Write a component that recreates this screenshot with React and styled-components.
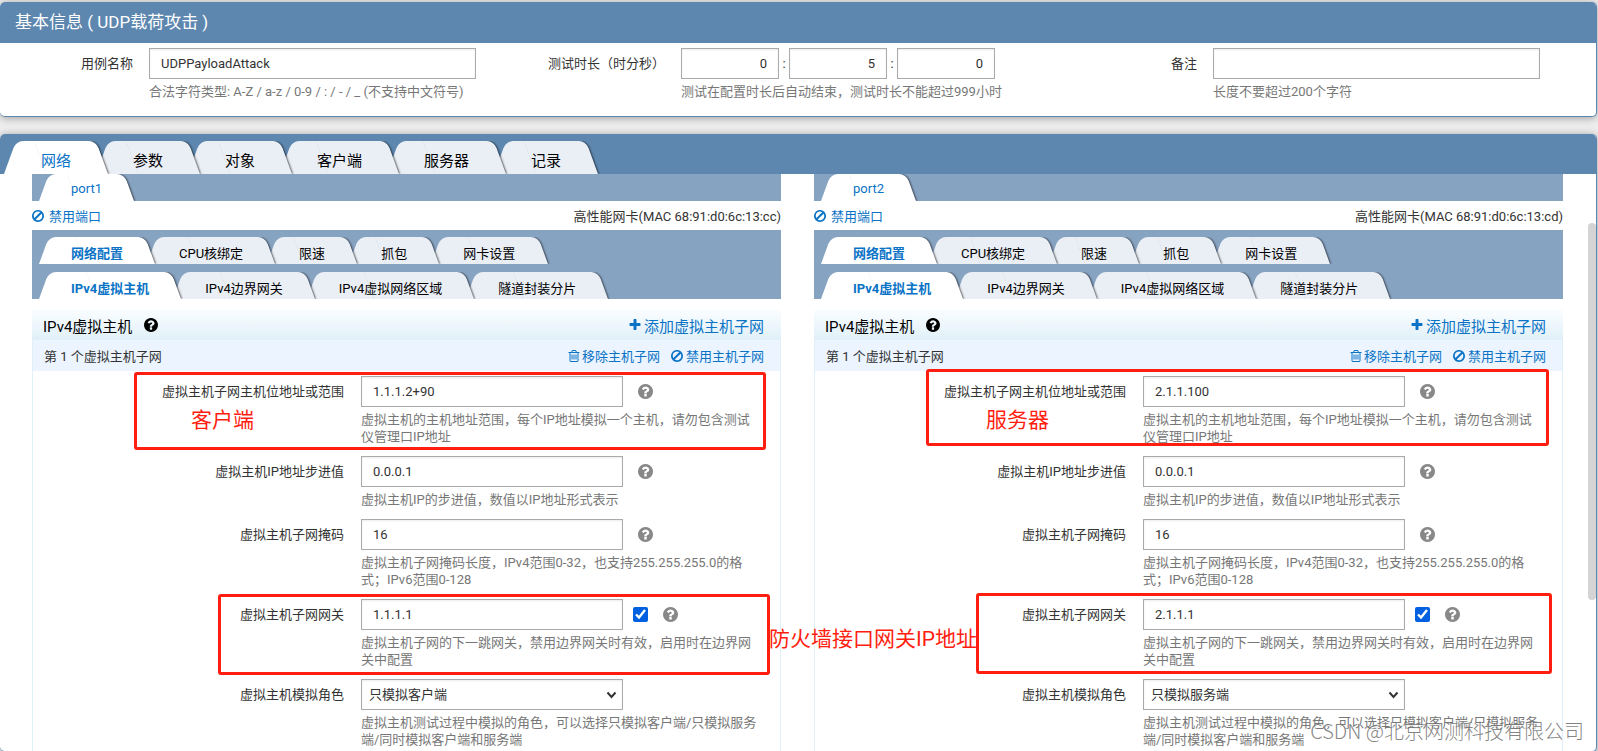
/**
 * Test Case Editor
 *
 * Basic info of a case and the network settings of its two ports,
 * with review notes drawn over the form
 */

import React, { useState } from 'react';
import styled, { createGlobalStyle, css } from 'styled-components';

const GlobalStyle = createGlobalStyle`
  * {
    box-sizing: border-box;
  }

  body {
    margin: 0;
    background: #eeeeee;
    overflow: hidden;
    font-family: Roboto, "Noto Sans CJK SC", sans-serif;
    font-size: 13px;
    color: #333;
  }

  button,
  input,
  select {
    font: inherit;
    color: inherit;
    margin: 0;
  }
`;

const Page = styled.div`
  position: relative;
  display: flex;
  flex-direction: column;
  gap: 17px;
  height: 100vh;
  padding: 2px 1px 0 0;
`;

const Panel = styled.section`
  position: relative;
  background: #fff;
  border: 1px solid #5d87af;
  border-left: none;
  border-top: none;
  border-radius: 5px;
  box-shadow: 0 1px 8px rgba(0, 0, 0, 0.35);
  overflow: hidden;
  flex: ${props => (props.$grow ? '1 1 0' : 'none')};
  margin-bottom: ${props => (props.$grow ? '-1px' : 0)};
  min-height: 0;
`;

const PanelTitle = styled.h1`
  margin: 0;
  padding: 0 15px;
  background: #5d87af;
  color: #fff;
  font-size: 17px;
  font-weight: 400;
  line-height: 41px;
`;

const InfoGrid = styled.div`
  display: grid;
  grid-template-columns: repeat(3, 1fr);
  padding: 5px 0 16px;
`;

const InfoField = styled.div`
  display: grid;
  grid-template-columns: 133px 1fr;
  column-gap: 16px;
  padding-right: 56px;
`;

const Label = styled.label`
  line-height: 31px;
  text-align: right;
`;

const Controls = styled.div`
  display: flex;
  align-items: center;
`;

const fieldBox = css`
  height: 31px;
  background: #fff;
  border: 1px solid #aaa;
  border-radius: 0;
  box-shadow: inset 0 1px 2px rgba(0, 0, 0, 0.08);
  outline: none;
`;

const TextInput = styled.input`
  ${fieldBox}
  width: ${props => props.$width || '100%'};
  padding: 0 11px;
  text-align: ${props => (props.$numeric ? 'right' : 'left')};
`;

const SelectWrap = styled.div`
  position: relative;
  width: 262px;
`;

const RoleSelect = styled.select`
  ${fieldBox}
  appearance: none;
  width: 100%;
  padding: 0 24px 0 7px;
`;

const Chevron = styled.svg`
  position: absolute;
  right: 6px;
  top: 12px;
  pointer-events: none;
`;

const Colon = styled.span`
  width: 10px;
  text-align: center;
`;

const Hint = styled.p`
  margin: 4px 0 0;
  color: #777;
  line-height: 17px;
`;

const TabBar = styled.div`
  display: flex;
  align-items: flex-end;
  height: ${props => props.$height}px;
  padding-left: ${props => (props.$main ? 4 : 7)}px;
  background: ${props => (props.$main ? '#5d87af' : '#87a3c2')};
`;

// Slanted tab: two skewed halves meet in the middle behind the text
const TabButton = styled.button`
  position: relative;
  z-index: ${props => props.$level};
  height: ${props => (props.$main ? 33 : 27)}px;
  padding: ${props => (props.$main ? '4px 37px 0' : props.$flat ? '2px 32px 0' : '3px 32px 0')};
  margin-right: ${props => (props.$main ? -12 : -8)}px;
  border: none;
  background: none;
  color: ${props => (props.$active ? '#0a73c6' : '#000')};
  font-size: ${props => (props.$main ? 15 : 13)}px;
  font-weight: ${props => (props.$active && props.$bold ? 700 : 400)};
  white-space: nowrap;
  cursor: pointer;

  &::before,
  &::after {
    content: '';
    position: absolute;
    z-index: -1;
    top: 0;
    bottom: 0;
    background: ${props => (props.$active ? '#fff' : '#eaeef5')};
  }

  &::before {
    left: 0;
    right: 40%;
    border-top-left-radius: 7px;
    transform: skewX(-20deg);
    transform-origin: bottom;
  }

  &::after {
    left: 40%;
    right: 0;
    border-top-right-radius: 7px;
    transform: skewX(20deg);
    transform-origin: bottom;
    box-shadow: 1px 0 2px rgba(0, 0, 0, 0.6);
    clip-path: inset(0 -6px 0 0);
  }
`;

const Columns = styled.div`
  display: grid;
  grid-template-columns: 1fr 1fr;
  column-gap: 33px;
  padding: 0 33px 0 32px;
`;

const PortStatus = styled.div`
  display: flex;
  align-items: center;
  justify-content: space-between;
  height: 29px;
`;

const ActionLink = styled.a`
  display: inline-flex;
  align-items: center;
  gap: ${props => props.$gap || 3}px;
  color: #0a73c6;
  text-decoration: none;
`;

const SectionHead = styled.div`
  display: flex;
  align-items: center;
  justify-content: space-between;
  height: 30px;
  margin-top: 11px;
  padding: 0 17px 0 11px;
  background: linear-gradient(#fafdff, #e0f0f8);
  font-size: 15px;
`;

const SectionTitle = styled.h2`
  display: flex;
  align-items: center;
  gap: 12px;
  margin: 0;
  color: #000;
  font-size: 15px;
  font-weight: 400;
`;

const SubnetBox = styled.div`
  border: 1px solid #e0f0fa;
  border-top: none;
`;

const SubnetHead = styled.div`
  display: flex;
  align-items: center;
  justify-content: space-between;
  height: 31px;
  padding: 0 16px 0 11px;
  background: #ebf4ff;
`;

const SubnetActions = styled.div`
  display: flex;
  gap: 11px;
`;

const SubnetForm = styled.div`
  display: flex;
  flex-direction: column;
  gap: 11px;
  padding: 5px 20px 40px 0;
`;

const FormRow = styled.div`
  display: grid;
  grid-template-columns: 311px 1fr;
  column-gap: 17px;
`;

const HelpIcon = styled.span`
  display: flex;
  margin-left: 15px;
  color: #888;
`;

const GatewayCheck = styled.input`
  width: 15px;
  height: 15px;
  margin-left: 10px;
  accent-color: #0060df;
`;

const ScrollThumb = styled.div`
  position: absolute;
  top: 89px;
  right: 0;
  width: 8px;
  height: 377px;
  border-radius: 4px;
  background: #d4d4d4;
`;

const NoteBox = styled.div`
  position: absolute;
  z-index: 20;
  left: ${props => props.$x}px;
  top: ${props => props.$y}px;
  width: ${props => props.$w}px;
  height: ${props => props.$h}px;
  border: 3px solid #ff1e10;
  border-radius: 3px;
  pointer-events: none;
`;

const NoteText = styled.span`
  position: absolute;
  z-index: 20;
  left: ${props => props.$x}px;
  top: ${props => props.$y}px;
  color: #ff1e10;
  font-size: 21px;
  line-height: 30px;
  white-space: nowrap;
`;

const Watermark = styled.span`
  position: absolute;
  z-index: 20;
  right: 14px;
  bottom: 6px;
  color: rgba(110, 110, 110, 0.85);
  font-family: "Noto Sans CJK SC", sans-serif;
  font-size: 20px;
  font-weight: 300;
  line-height: 28px;
  text-shadow: 1px 1px 1px #fff;
`;

const ICONS = {
  ban: 'M1440 893q0-161-87-295l-754 753q137 89 297 89 111 0 211.5-43.5t173.5-116.5 116-174.5 43-212.5zm-999 257l755-754q-135-91-300-91-148 0-273 73t-198 199-73 274q0 162 89 299zm1223-257q0 157-61 300t-163.5 246-245 164-298.5 61-298.5-61-245-164-163.5-246-61-300 61-299.5 163.5-245.5 245-164 298.5-61 298.5 61 245 164 163.5 245.5 61 299.5z',
  help: 'M1024 1376v-192q0-14-9-23t-23-9h-192q-14 0-23 9t-9 23v192q0 14 9 23t23 9h192q14 0 23-9t9-23zm256-672q0-88-55.5-163t-138.5-116-170-41q-243 0-371 213-15 24 8 42l132 100q7 6 19 6 16 0 25-12 53-68 86-92 34-24 86-24 48 0 85.5 26t37.5 59q0 38-20 61t-68 45q-63 28-115.5 86.5t-52.5 125.5v36q0 14 9 23t23 9h192q14 0 23-9t9-23q0-19 21.5-49.5t54.5-49.5q32-18 49-28.5t46-35 44.5-48 28-60.5 12.5-81zm384 192q0 209-103 385.5t-279.5 279.5-385.5 103-385.5-103-279.5-279.5-103-385.5 103-385.5 279.5-279.5 385.5-103 385.5 103 279.5 279.5 103 385.5z',
  plus: 'M1600 736v192q0 40-28 68t-68 28h-416v416q0 40-28 68t-68 28h-192q-40 0-68-28t-28-68v-416h-416q-40 0-68-28t-28-68v-192q0-40 28-68t68-28h416v-416q0-40 28-68t68-28h192q40 0 68 28t28 68v416h416q40 0 68 28t28 68z',
  trash: 'M704 736v576q0 14-9 23t-23 9h-64q-14 0-23-9t-9-23v-576q0-14 9-23t23-9h64q14 0 23 9t9 23zm256 0v576q0 14-9 23t-23 9h-64q-14 0-23-9t-9-23v-576q0-14 9-23t23-9h64q14 0 23 9t9 23zm256 0v576q0 14-9 23t-23 9h-64q-14 0-23-9t-9-23v-576q0-14 9-23t23-9h64q14 0 23 9t9 23zm128 724v-948h-896v948q0 22 7 40.5t14.5 27 10.5 8.5h832q3 0 10.5-8.5t14.5-27 7-40.5zm-672-1076h448l-48-117q-7-9-17-11h-317q-10 2-17 11zm928 32v64q0 14-9 23t-23 9h-96v948q0 83-47 143.5t-113 60.5h-832q-66 0-113-58.5t-47-141.5v-952h-96q-14 0-23-9t-9-23v-64q0-14 9-23t23-9h309l70-167q15-37 54-63t79-26h320q40 0 79 26t54 63l70 167h309q14 0 23 9t9 23z'
};

const MAIN_TABS = ['网络', '参数', '对象', '客户端', '服务器', '记录'];
const CONFIG_TABS = ['网络配置', 'CPU核绑定', '限速', '抓包', '网卡设置'];
const HOST_TABS = ['IPv4虚拟主机', 'IPv4边界网关', 'IPv4虚拟网络区域', '隧道封装分片'];

const PORTS = [
  { id: 'port1', mac: '68:91:d0:6c:13:cc', range: '1.1.1.2+90', gateway: '1.1.1.1', role: '只模拟客户端' },
  { id: 'port2', mac: '68:91:d0:6c:13:cd', range: '2.1.1.100', gateway: '2.1.1.1', role: '只模拟服务端' }
];

function Icon({ name, size = 12 }) {
  return (
    <svg width={size} height={size} viewBox="128 128 1536 1536" fill="currentColor" aria-hidden="true">
      <path d={ICONS[name]} />
    </svg>
  );
}

function Tabs({ items, height, main, flat, bold }) {
  const [active, setActive] = useState(items[0]);

  return (
    <TabBar $height={height} $main={main} role="tablist">
      {items.map((item, i) => (
        <TabButton
          key={item}
          type="button"
          role="tab"
          aria-selected={item === active}
          $level={items.length - i}
          $active={item === active}
          $main={main}
          $flat={flat}
          $bold={bold}
          onClick={() => setActive(item)}
        >
          {item}
        </TabButton>
      ))}
    </TabBar>
  );
}

function SubnetRow({ id, label, hint, help, check, children }) {
  return (
    <FormRow>
      <Label htmlFor={id}>{label}</Label>
      <div>
        <Controls>
          {children}
          {check && <GatewayCheck type="checkbox" defaultChecked aria-label={`启用${label}`} />}
          {help && <HelpIcon><Icon name="help" size={15} /></HelpIcon>}
        </Controls>
        <Hint>{hint}</Hint>
      </div>
    </FormRow>
  );
}

function PortColumn({ port }) {
  return (
    <div>
      <Tabs items={[port.id]} height={27} flat />
      <PortStatus>
        <ActionLink href="#" $gap={5}><Icon name="ban" />禁用端口</ActionLink>
        <span>高性能网卡(MAC {port.mac})</span>
      </PortStatus>
      <Tabs items={CONFIG_TABS} height={34} bold />
      <Tabs items={HOST_TABS} height={35} bold />

      <SectionHead>
        <SectionTitle>IPv4虚拟主机 <Icon name="help" size={14} /></SectionTitle>
        <ActionLink href="#"><Icon name="plus" />添加虚拟主机子网</ActionLink>
      </SectionHead>

      <SubnetBox>
        <SubnetHead>
          <span>第 1 个虚拟主机子网</span>
          <SubnetActions>
            <ActionLink href="#" $gap={2}><Icon name="trash" />移除主机子网</ActionLink>
            <ActionLink href="#"><Icon name="ban" />禁用主机子网</ActionLink>
          </SubnetActions>
        </SubnetHead>

        <SubnetForm>
          <SubnetRow
            id={`${port.id}-range`}
            label="虚拟主机子网主机位地址或范围"
            hint="虚拟主机的主机地址范围，每个IP地址模拟一个主机，请勿包含测试仪管理口IP地址"
            help
          >
            <TextInput id={`${port.id}-range`} $width="262px" defaultValue={port.range} />
          </SubnetRow>
          <SubnetRow
            id={`${port.id}-step`}
            label="虚拟主机IP地址步进值"
            hint="虚拟主机IP的步进值，数值以IP地址形式表示"
            help
          >
            <TextInput id={`${port.id}-step`} $width="262px" defaultValue="0.0.0.1" />
          </SubnetRow>
          <SubnetRow
            id={`${port.id}-mask`}
            label="虚拟主机子网掩码"
            hint="虚拟主机子网掩码长度，IPv4范围0-32，也支持255.255.255.0的格式；IPv6范围0-128"
            help
          >
            <TextInput id={`${port.id}-mask`} $width="262px" defaultValue="16" />
          </SubnetRow>
          <SubnetRow
            id={`${port.id}-gateway`}
            label="虚拟主机子网网关"
            hint="虚拟主机子网的下一跳网关，禁用边界网关时有效，启用时在边界网关中配置"
            check
            help
          >
            <TextInput id={`${port.id}-gateway`} $width="262px" defaultValue={port.gateway} />
          </SubnetRow>
          <SubnetRow
            id={`${port.id}-role`}
            label="虚拟主机模拟角色"
            hint="虚拟主机测试过程中模拟的角色，可以选择只模拟客户端/只模拟服务端/同时模拟客户端和服务端"
          >
            <SelectWrap>
              <RoleSelect id={`${port.id}-role`} defaultValue={port.role}>
                <option>只模拟客户端</option>
                <option>只模拟服务端</option>
              </RoleSelect>
              <Chevron width="11" height="8" viewBox="0 0 11 8" fill="none" aria-hidden="true">
                <path d="M1.5 1.5l4 4.5 4-4.5" stroke="#333" strokeWidth="2" />
              </Chevron>
            </SelectWrap>
          </SubnetRow>
        </SubnetForm>
      </SubnetBox>
    </div>
  );
}

export default function App() {
  return (
    <Page>
      <GlobalStyle />

      <Panel>
        <PanelTitle>基本信息 ( UDP载荷攻击 )</PanelTitle>
        <InfoGrid>
          <InfoField>
            <Label htmlFor="case-name">用例名称</Label>
            <div>
              <TextInput id="case-name" defaultValue="UDPPayloadAttack" />
              <Hint>合法字符类型: A-Z / a-z / 0-9 / : / - / _ (不支持中文符号)</Hint>
            </div>
          </InfoField>
          <InfoField>
            <Label htmlFor="hours">测试时长（时分秒）</Label>
            <div>
              <Controls>
                <TextInput id="hours" $width="98px" $numeric defaultValue="0" />
                <Colon>:</Colon>
                <TextInput aria-label="分" $width="98px" $numeric defaultValue="5" />
                <Colon>:</Colon>
                <TextInput aria-label="秒" $width="98px" $numeric defaultValue="0" />
              </Controls>
              <Hint>测试在配置时长后自动结束，测试时长不能超过999小时</Hint>
            </div>
          </InfoField>
          <InfoField>
            <Label htmlFor="remark">备注</Label>
            <div>
              <TextInput id="remark" />
              <Hint>长度不要超过200个字符</Hint>
            </div>
          </InfoField>
        </InfoGrid>
      </Panel>

      <Panel $grow>
        <Tabs items={MAIN_TABS} height={40} main />
        <Columns>
          {PORTS.map(port => <PortColumn key={port.id} port={port} />)}
        </Columns>
        <ScrollThumb />
      </Panel>

      {/* Review notes */}
      <NoteBox $x={134} $y={372} $w={632} $h={78} />
      <NoteBox $x={218} $y={594} $w={552} $h={81} />
      <NoteBox $x={926} $y={369} $w={623} $h={77} />
      <NoteBox $x={976} $y={593} $w={576} $h={81} />
      <NoteText $x={191} $y={405}>客户端</NoteText>
      <NoteText $x={986} $y={405}>服务器</NoteText>
      <NoteText $x={769} $y={624}>防火墙接口网关IP地址</NoteText>

      <Watermark>CSDN @北京网测科技有限公司</Watermark>
    </Page>
  );
}
